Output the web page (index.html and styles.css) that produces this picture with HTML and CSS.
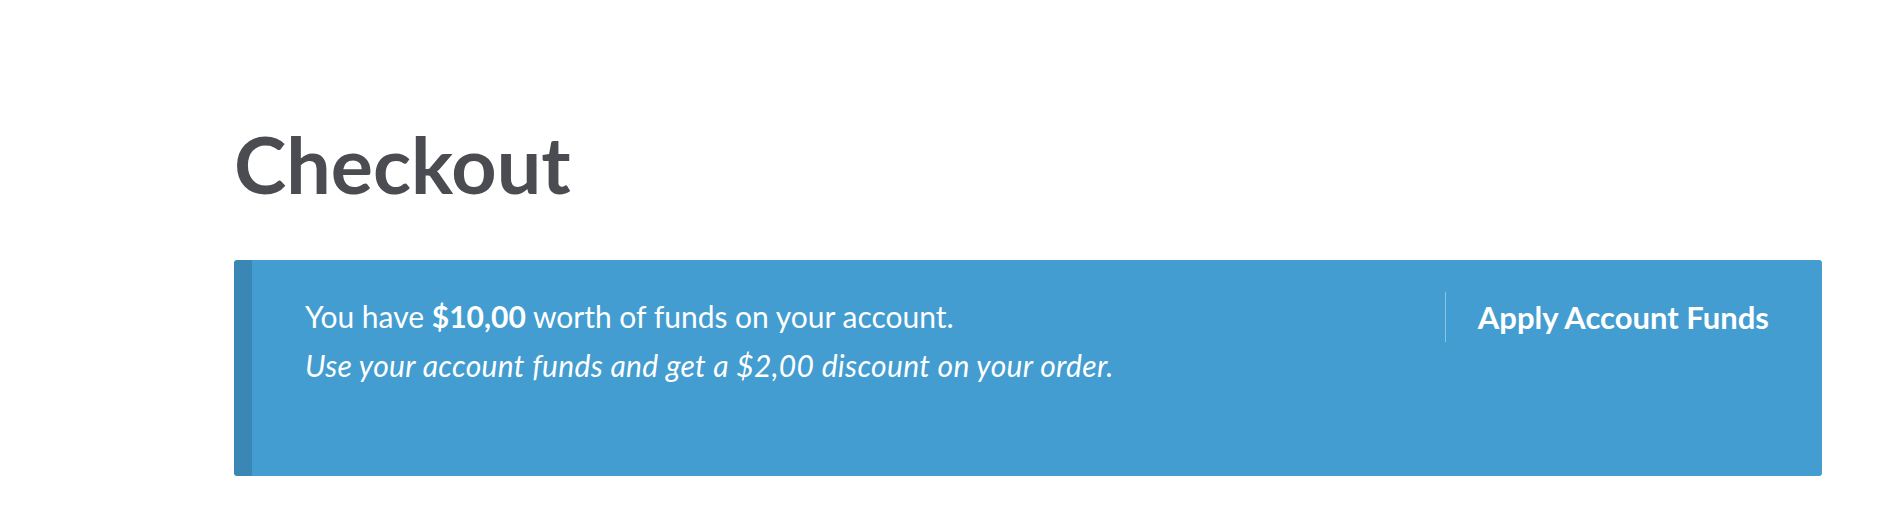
FILE: index.html
```html
<!DOCTYPE html>
<html lang="en">
<head>
  <meta charset="UTF-8">
  <title>Checkout</title>
  <link rel="stylesheet" href="styles.css">
</head>
<body>

  <div class="page">
    <h1>Checkout</h1>

    <div class="funds">
      <div class="funds-text">
        <p>You have <strong>$10,00</strong> worth of funds on your account.</p>
        <p><em>Use your account funds and get a $2,00 discount on your order.</em></p>
      </div>
      <div class="funds-action">
        <a href="#">Apply Account Funds</a>
      </div>
    </div>
  </div>

</body>
</html>
```

FILE: styles.css
```css
body {
  font-family: Lato, 'Liberation Sans', sans-serif;
  background: #fff;
  color: #4a4c51;
  margin: 0;
}

.page {
  padding: 116px 74px 40px 234px;
}

h1 {
  font-size: 79px;
  font-weight: 700;
  line-height: 96px;
  margin: 0 0 48px 0;
  color: #4a4c51;
}

.funds {
  display: flex;
  justify-content: space-between;
  align-items: flex-start;
  background: #439dd0;
  border-left: 18px solid #3a87b5;
  border-radius: 3px;
  color: #fff;
  height: 216px;
  box-sizing: border-box;
  padding: 32px 53px 0 53px;
}

.funds-text p {
  margin: 0;
  font-size: 30px;
  line-height: 49px;
}

.funds-text strong {
  font-weight: 700;
}

.funds-text em {
  letter-spacing: 0.33px;
}

.funds-action {
  border-left: 1px solid rgba(255, 255, 255, 0.4);
  padding-left: 32px;
  font-size: 31px;
  line-height: 50px;
}

.funds-action a {
  color: #fff;
  font-weight: 700;
  text-decoration: none;
}
```
